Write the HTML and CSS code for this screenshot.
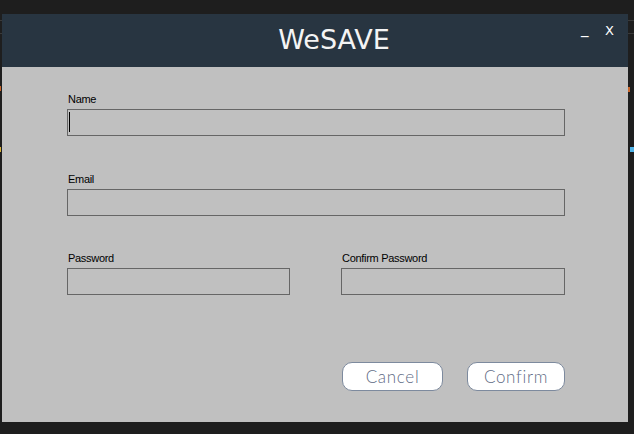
FILE: index.html
```html
<!DOCTYPE html>
<html lang="en">
<head>
<meta charset="utf-8">
<title>WeSAVE</title>
<link rel="stylesheet" href="styles.css">
</head>
<body>
<div class="window">
  <header class="titlebar">
    <h1 class="title">WeSAVE</h1>
    <span class="ctl ctl-min">_</span>
    <span class="ctl ctl-close">X</span>
  </header>
  <main class="form">
    <div class="field">
      <label class="label">Name</label>
      <div class="box"><span class="caret"></span></div>
    </div>
    <div class="field field-email">
      <label class="label">Email</label>
      <div class="box"></div>
    </div>
    <div class="pair">
      <div class="field">
        <label class="label">Password</label>
        <div class="box"></div>
      </div>
      <div class="field">
        <label class="label">Confirm Password</label>
        <div class="box"></div>
      </div>
    </div>
    <div class="actions">
      <button class="btn btn-cancel">Cancel</button>
      <button class="btn btn-confirm">Confirm</button>
    </div>
  </main>
</div>
</body>
</html>
```

FILE: styles.css
```css
html, body {
  margin: 0;
  padding: 0;
}
body {
  width: 634px;
  height: 434px;
  overflow: hidden;
  background-color: #1e1e1e;
  background-image:
    linear-gradient(#3a3a3a, #3a3a3a),
    linear-gradient(#3a3a3a, #3a3a3a),
    linear-gradient(#c8652a, #c8652a),
    linear-gradient(#d7b23a, #d7b23a),
    linear-gradient(#c8652a, #c8652a),
    linear-gradient(#4fb3e8, #4fb3e8);
  background-size: 100% 1px, 100% 1px, 1px 5px, 1px 5px, 2px 5px, 4px 5px;
  background-position: 0 20px, 0 33px, 0 86px, 0 147px, 628px 87px, 630px 147px;
  background-repeat: no-repeat;
  font-family: "Liberation Sans", Arial, sans-serif;
}
.window {
  margin: 14px 0 0 2px;
  width: 626px;
  height: 408px;
  background: #c0c0c0;
  display: flex;
  flex-direction: column;
}
.titlebar {
  position: relative;
  height: 53px;
  background: #283541;
  display: flex;
  justify-content: center;
  padding-left: 38px;
  box-sizing: border-box;
}
.title {
  margin: 0;
  font-family: "DejaVu Sans", Verdana, sans-serif;
  font-weight: normal;
  font-size: 27px;
  line-height: 51px;
  color: #f4f4f4;
}
.ctl {
  position: absolute;
  color: #ffffff;
  font-family: "DejaVu Sans", Verdana, sans-serif;
}
.ctl-min {
  left: 579px;
  top: 6px;
  font-size: 15px;
  line-height: 16px;
}
.ctl-close {
  left: 603px;
  top: 10px;
  font-size: 13px;
  line-height: 13px;
}
.form {
  padding: 26px 63px 0 65px;
  display: flex;
  flex-direction: column;
}
.field {
  display: flex;
  flex-direction: column;
}
.label {
  font-size: 11px;
  line-height: 13px;
  letter-spacing: -0.3px;
  color: #000;
  margin-bottom: 3px;
  padding-left: 1px;
}
.box {
  height: 27px;
  box-sizing: border-box;
  border: 1px solid #666666;
  background: #c0c0c0;
  padding: 2px 1px;
}
.caret {
  display: block;
  width: 1px;
  height: 20px;
  background: #000;
}
.field-email {
  margin-top: 37px;
}
.pair {
  margin-top: 36px;
  display: grid;
  grid-template-columns: 223px 224px;
  column-gap: 51px;
}
.actions {
  margin-top: 67px;
  display: flex;
  justify-content: flex-end;
  gap: 24px;
}
.btn {
  height: 29px;
  box-sizing: border-box;
  background: #ffffff;
  border: 1px solid #7d8a9e;
  border-radius: 10px;
  color: #5f6c85;
  font-family: Lato, "Open Sans", sans-serif;
  font-weight: 300;
  font-size: 17px;
  letter-spacing: 0.7px;
  padding: 0;
  line-height: 27px;
}
.btn-cancel {
  width: 101px;
}
.btn-confirm {
  width: 98px;
}
```
